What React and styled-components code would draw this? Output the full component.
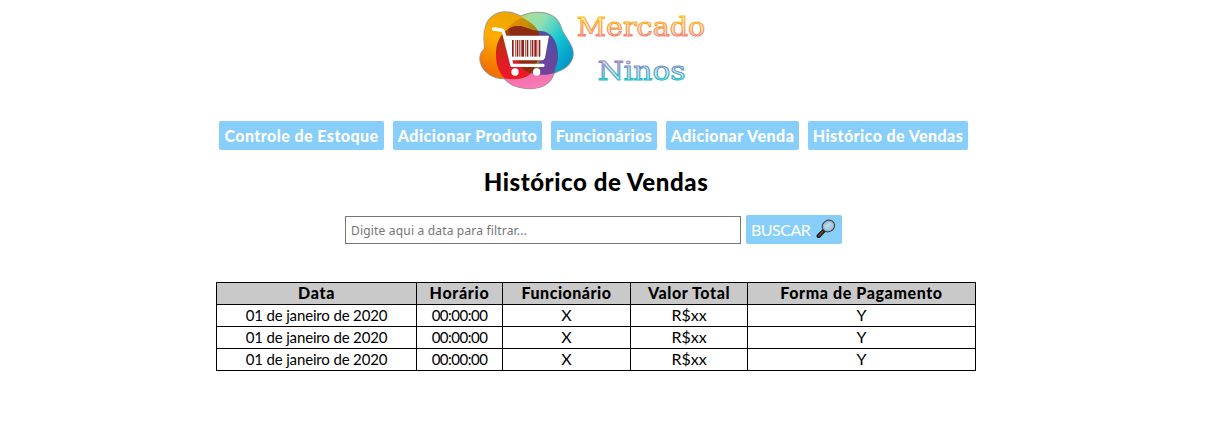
import React from "react";
import styled, { createGlobalStyle } from "styled-components";

const GlobalStyle = createGlobalStyle`
  body {
    margin: 0;
    background: #fff;
    color: #000;
    font-family: "Gill Sans", "Gill Sans MT", Lato, sans-serif;
    font-size: 16px;
  }
`;

const Page = styled.main`
  width: 760px;
  margin-left: 216px;
  display: flex;
  flex-direction: column;
`;

const Logo = styled.svg`
  display: block;
  width: 250px;
  height: 100px;
  margin-left: 254px;
`;

const Nav = styled.nav`
  display: flex;
  gap: 9px;
  margin: 21px 0 0 3px;
`;

const NavLink = styled.a`
  box-sizing: border-box;
  width: ${(p) => p.$width}px;
  height: 29px;
  border-radius: 2px;
  background: #87cefa;
  color: #fff;
  font-weight: 900;
  line-height: 29px;
  text-align: center;
  white-space: nowrap;
  letter-spacing: ${(p) => p.$tracking}px;
`;

const Title = styled.h2`
  margin: 17px 0 0;
  height: 30px;
  line-height: 30px;
  font-size: 24px;
  font-weight: 900;
  text-align: center;
  white-space: nowrap;
  letter-spacing: 0.58px;
`;

const SearchForm = styled.form`
  display: flex;
  align-items: flex-start;
  gap: 5px;
  margin: 18px 0 0 129px;
`;

const SearchInput = styled.input`
  box-sizing: border-box;
  width: 396px;
  height: 28px;
  margin: 1px 0 0;
  padding: 1px 5px;
  border: 1px solid #767676;
  border-radius: 0;
  font: 12px "Noto Sans", "Open Sans", sans-serif;
  letter-spacing: 0.18px;
  &::placeholder {
    color: #757575;
  }
`;

const SearchButton = styled.button`
  display: flex;
  align-items: center;
  justify-content: space-between;
  width: 96px;
  height: 29px;
  padding: 0 6px 1px 5px;
  border: 0;
  border-radius: 2px;
  background: #87cefa;
  color: #fff;
  font: 16px Lato, sans-serif;
  letter-spacing: -0.5px;
`;

const Table = styled.table`
  width: 760px;
  margin: 38px 0 0;
  border-collapse: collapse;
  table-layout: fixed;
  text-align: center;
`;

const Row = styled.tr`
  height: 22px;
`;

const cellBorder = "1px solid #000";

const HeadCell = styled.th`
  box-sizing: border-box;
  height: 22px;
  padding: 0 0 2px;
  border: ${cellBorder};
  background: #cac9ca;
  font-weight: 900;
  line-height: 19px;
  white-space: nowrap;
  letter-spacing: ${(p) => p.$tracking}px;
`;

const Cell = styled.td`
  box-sizing: border-box;
  height: 22px;
  padding: 0 0 ${(p) => (p.$size === 16 ? 2 : 0)}px;
  border: ${cellBorder};
  font-size: ${(p) => p.$size}px;
  line-height: ${(p) => (p.$size === 16 ? 19 : 21)}px;
  white-space: nowrap;
  letter-spacing: ${(p) => p.$tracking}px;
`;

const links = [
  { label: "Controle de Estoque", width: 165, tracking: 0.44 },
  { label: "Adicionar Produto", width: 149, tracking: 0.53 },
  { label: "Funcionários", width: 106, tracking: 0.42 },
  { label: "Adicionar Venda", width: 133, tracking: 0.47 },
  { label: "Histórico de Vendas", width: 160, tracking: 0.42 },
];

const columns = [
  { label: "Data", width: 200, head: 0.7, body: -0.15, size: 15 },
  { label: "Horário", width: 86, head: 0.7, body: -0.5, size: 15 },
  { label: "Funcionário", width: 128, head: 0.5, body: 0, size: 16 },
  { label: "Valor Total", width: 117, head: 0.6, body: 0, size: 16 },
  { label: "Forma de Pagamento", width: 228, head: 0.6, body: 0, size: 16 },
];

const sale = ["01 de janeiro de 2020", "00:00:00", "X", "R$xx", "Y"];
const sales = [sale, sale, sale];

const ORANGE_BLOB =
  "M46 86C50 58 75 36 107 36C135 37 156 50 175 64C196 78 207 91 208 110C209 140 208 190 184 219C166 239 126 241 101 235C72 235 39 218 32 187C28 170 33 157 43 148C48 133 37 112 46 86Z";
const TEAL_BLOB =
  "M115 82C130 58 160 41 199 38C238 37 263 51 273 84C280 108 309 132 309 160C309 184 291 204 263 214C240 229 199 225 174 217C145 204 134 158 115 82Z";
const PINK_BLOB =
  "M78 155C79 115 108 78 145 78C168 79 182 93 211 93C244 94 262 124 264 160C266 185 256 207 247 231C237 252 211 267 180 265C147 265 120 256 103 235C84 213 77 190 78 155Z";

const BARS = [
  [126, 5], [135, 2], [140, 5], [148, 3], [154, 8], [165, 2], [170, 5], [180, 2], [185, 5], [193, 7], [203, 2], [207, 4],
];

function MarketLogo() {
  return (
    <Logo viewBox="0 0 750 300" role="img" aria-label="Mercado Ninos">
      <defs>
        <linearGradient id="orange" x1="0.7" y1="0" x2="0.2" y2="1">
          <stop offset="0" stopColor="#e9a400" />
          <stop offset="0.5" stopColor="#ffac00" />
          <stop offset="1" stopColor="#ef6500" />
        </linearGradient>
        <linearGradient id="teal" x1="0.1" y1="0.1" x2="1" y2="0.7">
          <stop offset="0" stopColor="#b6dc80" />
          <stop offset="0.35" stopColor="#8fe0b4" />
          <stop offset="0.7" stopColor="#12c5d0" />
          <stop offset="1" stopColor="#0496cb" />
        </linearGradient>
        <linearGradient id="pink" x1="0.3" y1="0" x2="0.5" y2="1">
          <stop offset="0" stopColor="#d55089" />
          <stop offset="1" stopColor="#fa79b6" />
        </linearGradient>
        <linearGradient id="red" x1="0.5" y1="0" x2="0.4" y2="1">
          <stop offset="0.15" stopColor="#a63c08" />
          <stop offset="0.6" stopColor="#df1c25" />
          <stop offset="1" stopColor="#f5162c" />
        </linearGradient>
        <linearGradient id="purple" x1="0.8" y1="0.2" x2="0.4" y2="1">
          <stop offset="0" stopColor="#534da6" />
          <stop offset="1" stopColor="#8c3a8b" />
        </linearGradient>
        <linearGradient id="amber" x1="0" y1="0" x2="1" y2="0.3">
          <stop offset="0" stopColor="#e58c00" />
          <stop offset="0.6" stopColor="#c98d0c" />
          <stop offset="1" stopColor="#7c8a2c" />
        </linearGradient>
        <linearGradient id="sunset" x1="0" y1="0" x2="0" y2="1">
          <stop offset="0.15" stopColor="#fdbd08" />
          <stop offset="0.85" stopColor="#f47c6e" />
        </linearGradient>
        <linearGradient id="sea" x1="0" y1="0" x2="0" y2="1">
          <stop offset="0.15" stopColor="#9c80c4" />
          <stop offset="0.8" stopColor="#1fb8c5" />
        </linearGradient>
        <clipPath id="orangeClip"><path d={ORANGE_BLOB} /></clipPath>
        <clipPath id="tealClip"><path d={TEAL_BLOB} /></clipPath>
        <clipPath id="pinkClip"><path d={PINK_BLOB} /></clipPath>
      </defs>
      <g stroke="#999" strokeWidth="5">
        <path d={ORANGE_BLOB} />
        <path d={TEAL_BLOB} />
        <path d={PINK_BLOB} />
      </g>
      <path d={PINK_BLOB} fill="url(#pink)" />
      <path d={TEAL_BLOB} fill="url(#teal)" />
      <path d={ORANGE_BLOB} fill="url(#orange)" />
      <g clipPath="url(#tealClip)">
        <path d={PINK_BLOB} fill="url(#purple)" />
        <path d="M115 82C130 66 147 55 158 53L175 64C196 78 207 91 208 110V222L120 200Z" fill="url(#amber)" />
      </g>
      <g clipPath="url(#orangeClip)">
        <path d={PINK_BLOB} fill="url(#red)" />
        <g clipPath="url(#pinkClip)">
          <path d={TEAL_BLOB} fill="#8d2c10" />
        </g>
      </g>
      <path
        d="M71 87L94 90Q99 91 101 97L126 196H219"
        fill="none"
        stroke="#fff"
        strokeWidth="10"
        strokeLinecap="round"
        strokeLinejoin="round"
      />
      <path d="M102 107H237L225 173Q222 181 213 181H123Z" fill="#fff" />
      <circle cx="135" cy="216" r="11" fill="#fff" />
      <circle cx="200" cy="216" r="11" fill="#fff" />
      {BARS.map(([x, width]) => (
        <rect key={x} x={x} y="120" width={width} height="50" fill="#8d2018" />
      ))}
      <g fontFamily="DejaVu Serif, serif" fontSize="80" strokeWidth="3.2" fillOpacity="0.25">
        <text x="320" y="108" textLength="386" lengthAdjust="spacingAndGlyphs" fill="url(#sunset)" stroke="url(#sunset)">Mercado</text>
        <text x="383" y="240" textLength="264" lengthAdjust="spacingAndGlyphs" fill="url(#sea)" stroke="url(#sea)">Ninos</text>
      </g>
    </Logo>
  );
}

function Magnifier() {
  return (
    <svg width="20" height="20" viewBox="0 0 20 20" aria-hidden="true">
      <path d="M2.6 17L8.4 11.2" stroke="#151515" strokeWidth="4" strokeLinecap="round" />
      <path d="M2.8 16.7L6.7 12.8" stroke="#6b5444" strokeWidth="1.6" strokeLinecap="round" />
      <ellipse cx="12.4" cy="7" rx="6.3" ry="5.6" transform="rotate(-30 12.4 7)" fill="#a9cce8" stroke="#3a4248" strokeWidth="1.2" />
      <ellipse cx="12.4" cy="7" rx="5.2" ry="4.5" transform="rotate(-30 12.4 7)" fill="none" stroke="#a5b2ba" strokeWidth="1" />
      <path d="M10 8.4L14 4.6" stroke="#c6def2" strokeWidth="1.6" />
    </svg>
  );
}

export default function App() {
  return (
    <>
      <GlobalStyle />
      <Page>
        <MarketLogo />
        <Nav>
          {links.map((link) => (
            <NavLink key={link.label} $width={link.width} $tracking={link.tracking}>
              {link.label}
            </NavLink>
          ))}
        </Nav>
        <Title>Histórico de Vendas</Title>
        <SearchForm>
          <SearchInput placeholder="Digite aqui a data para filtrar..." />
          <SearchButton type="button">
            BUSCAR
            <Magnifier />
          </SearchButton>
        </SearchForm>
        <Table>
          <colgroup>
            {columns.map((column) => (
              <col key={column.label} width={column.width} />
            ))}
          </colgroup>
          <thead>
            <Row>
              {columns.map((column) => (
                <HeadCell key={column.label} $tracking={column.head}>{column.label}</HeadCell>
              ))}
            </Row>
          </thead>
          <tbody>
            {sales.map((row, i) => (
              <Row key={i}>
                {row.map((value, j) => (
                  <Cell key={j} $size={columns[j].size} $tracking={columns[j].body}>{value}</Cell>
                ))}
              </Row>
            ))}
          </tbody>
        </Table>
      </Page>
    </>
  );
}
